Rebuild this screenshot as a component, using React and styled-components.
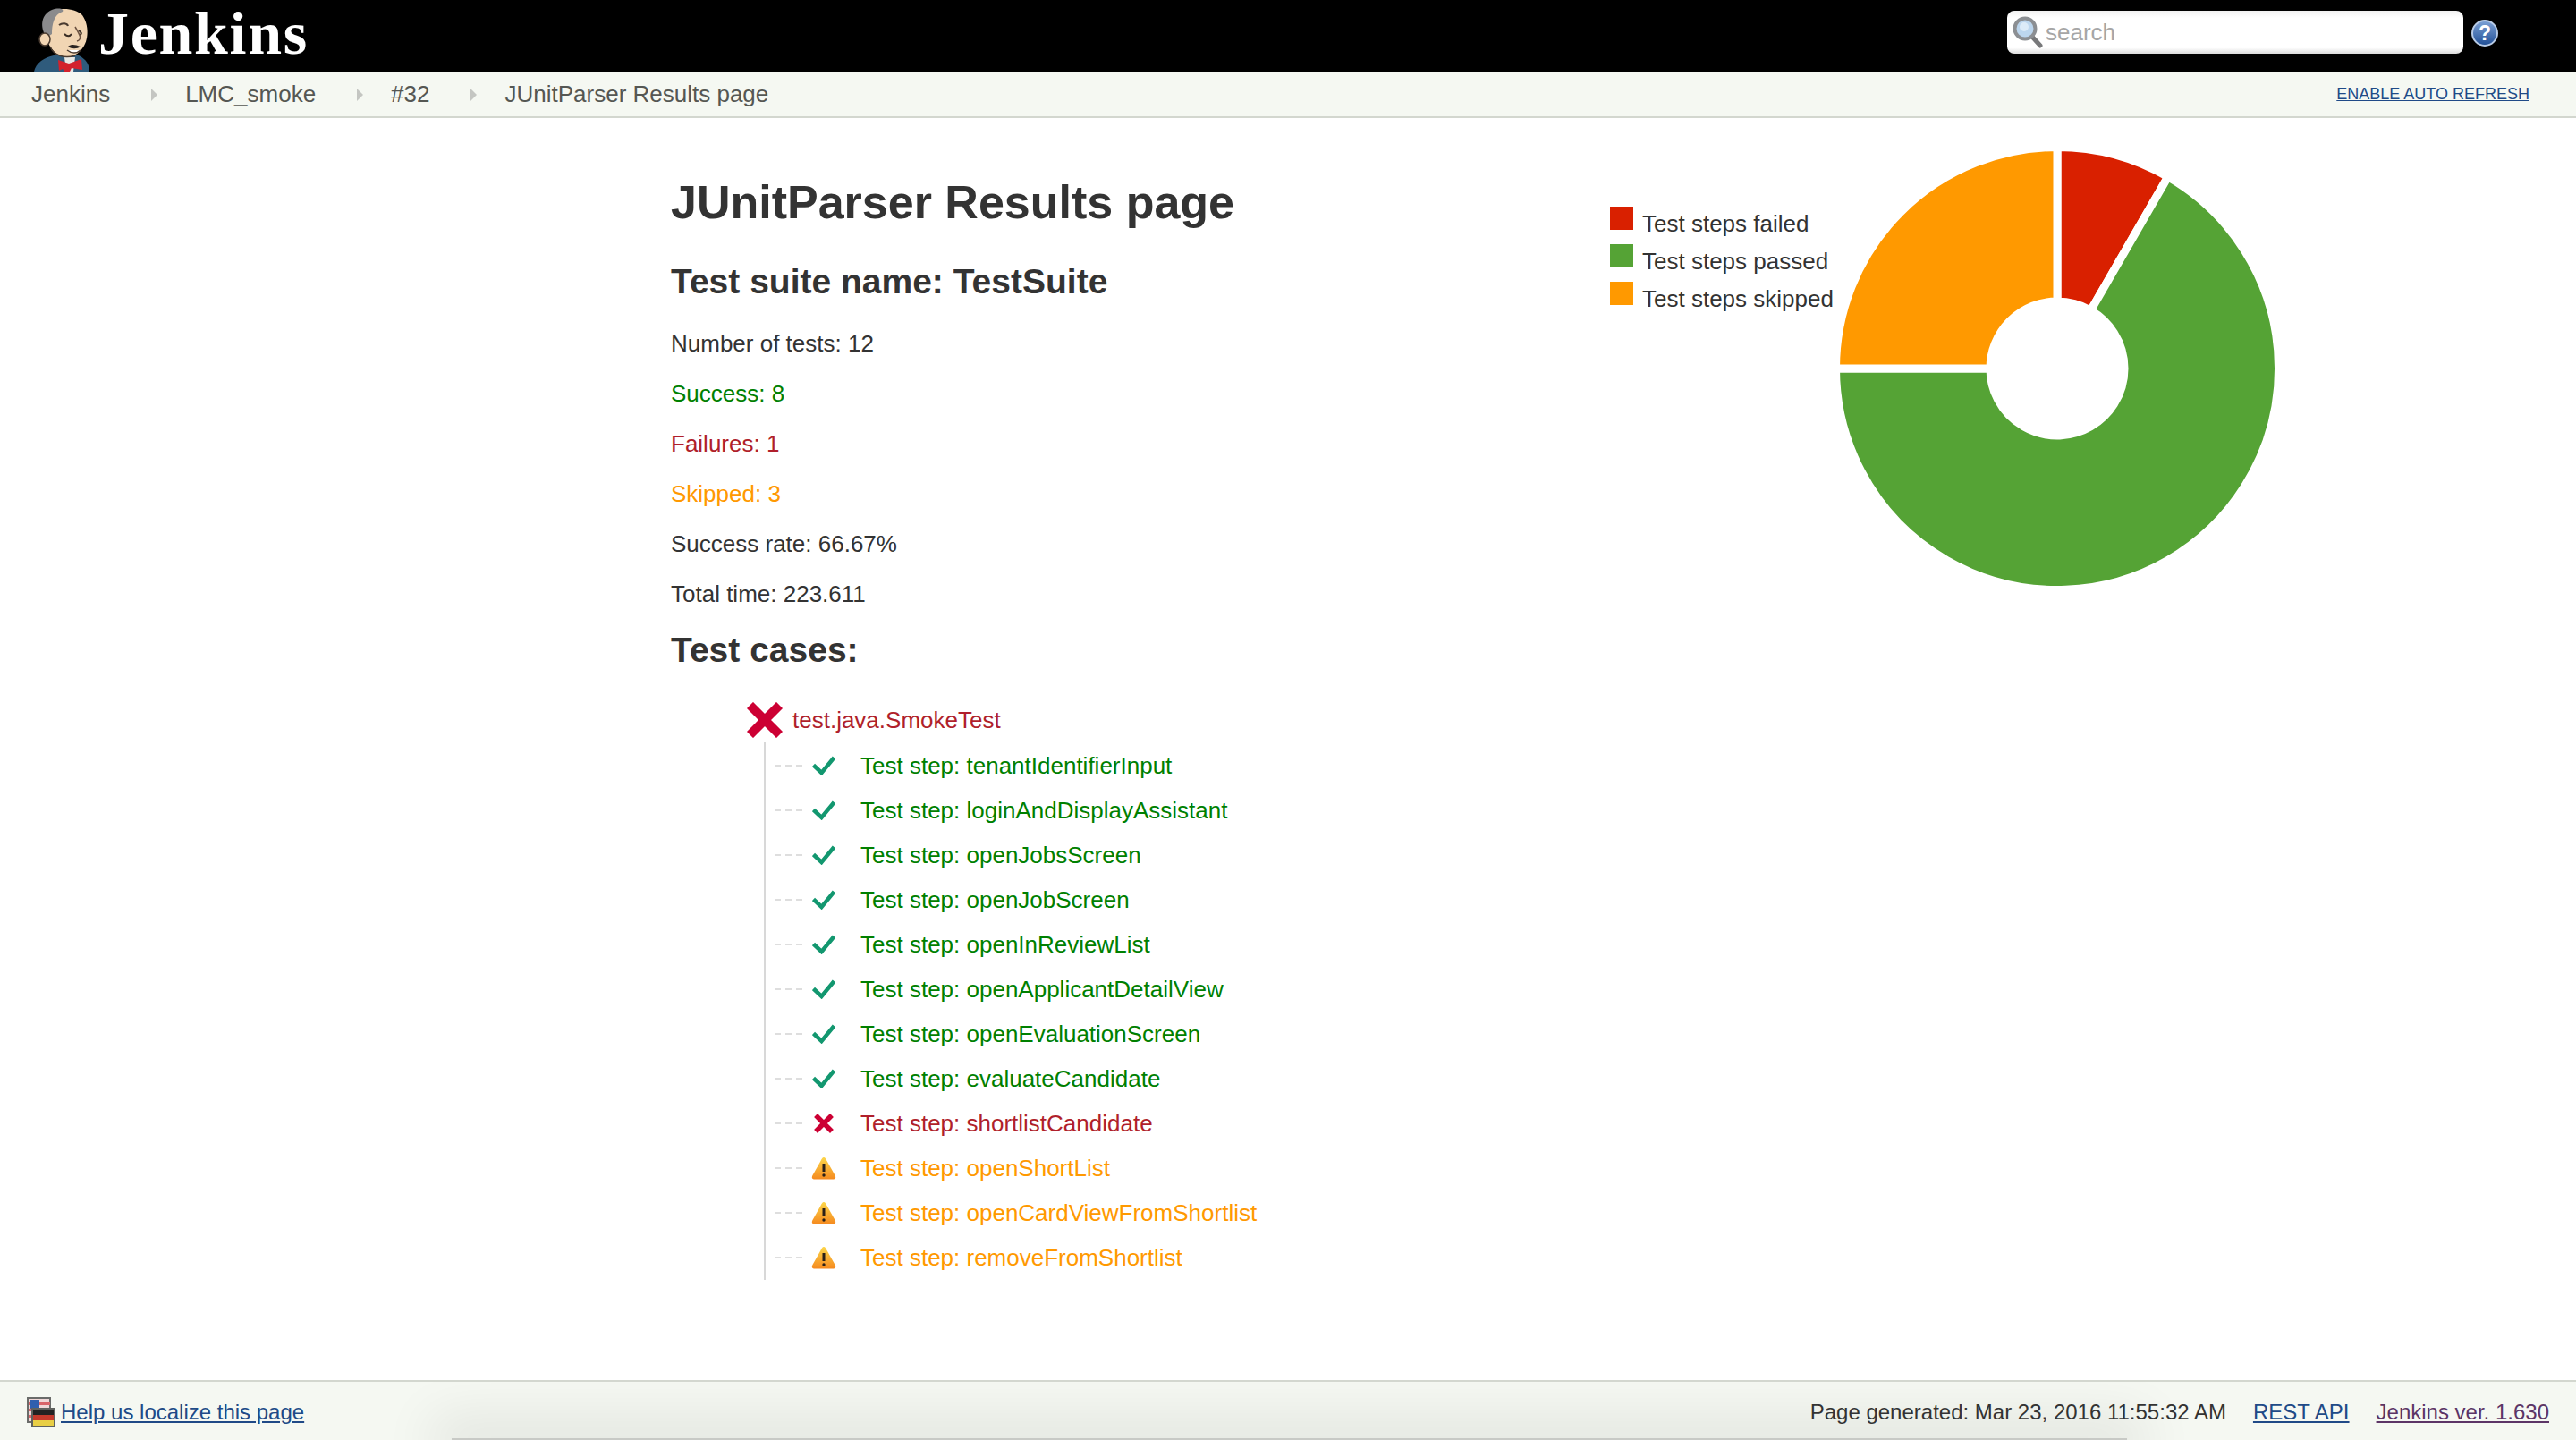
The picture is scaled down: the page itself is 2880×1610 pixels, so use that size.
import React from 'react';
import styled, { createGlobalStyle } from 'styled-components';

const GlobalStyle = createGlobalStyle`
  html, body {
    margin: 0;
    padding: 0;
    background: #fff;
    font-family: "Liberation Sans", Arial, sans-serif;
    font-size: 26px;
    color: #333;
  }
`;

const STATUS_COLORS = {
  passed: '#008000',
  failed: '#b01f2b',
  skipped: '#ff9900',
};

const Page = styled.div`
  display: flex;
  flex-direction: column;
  min-height: 1610px;
`;

const Header = styled.header`
  display: flex;
  align-items: flex-start;
  height: 80px;
  background: #000;
`;

const Logo = styled.a`
  display: flex;
  align-items: flex-start;
  margin-left: 36px;

  svg {
    margin-top: 6px;
  }
`;

const LogoText = styled.span`
  margin: 4px 0 0 6px;
  font-family: "Liberation Serif", "Times New Roman", serif;
  font-size: 68px;
  line-height: 66px;
  font-weight: bold;
  letter-spacing: 1.7px;
  color: #fff;
`;

const SearchArea = styled.div`
  display: flex;
  align-items: center;
  gap: 8px;
  margin: 12px 0 0 auto;
  padding-right: 86px;
`;

const SearchBox = styled.div`
  display: flex;
  align-items: center;
  gap: 3px;
  box-sizing: border-box;
  width: 510px;
  height: 48px;
  padding-left: 6px;
  border-radius: 8px;
  background: linear-gradient(#f1f1f1 0, #fff 8px, #fff 86%, #dcdcdc 100%);
`;

const SearchPlaceholder = styled.span`
  padding-top: 1px;
  font-size: 26px;
  color: #a6a6a6;
`;

const HelpSlot = styled.span`
  display: flex;
  padding-top: 2px;
`;

const Breadcrumbs = styled.nav`
  display: flex;
  align-items: center;
  box-sizing: border-box;
  height: 52px;
  padding: 0 52px 0 35px;
  background: #f5f8f2;
  border-bottom: 2px solid #d3d7cf;
`;

const Crumb = styled.span`
  font-size: 26px;
  color: #555753;
`;

const CrumbArrow = styled.span`
  width: 0;
  height: 0;
  margin: 2px 31px 0 46px;
  border-top: 7px solid transparent;
  border-bottom: 7px solid transparent;
  border-left: 7px solid #c4c6c2;
`;

const AutoRefresh = styled.a`
  margin-left: auto;
  font-size: 18px;
  color: #204a87;
  text-decoration: underline;
`;

const Content = styled.main`
  display: flex;
  padding-left: 750px;
`;

const Results = styled.section`
  width: 1050px;
`;

const Title = styled.h1`
  margin: 64px 0 0;
  font-size: 52px;
  line-height: 60px;
  font-weight: bold;
  color: #333;
`;

const SectionTitle = styled.h2`
  margin: ${(p) => p.$top}px 0 0;
  font-size: 39px;
  line-height: 46px;
  font-weight: bold;
  color: #333;
`;

const Stats = styled.div`
  margin-top: 18px;
`;

const Stat = styled.p`
  margin: 0;
  font-size: 26px;
  line-height: 56px;
  color: ${(p) => STATUS_COLORS[p.$status] || '#333'};
`;

const RootCase = styled.div`
  display: flex;
  align-items: center;
  gap: 11px;
  height: 50px;
  margin: 30px 0 0 85px;
  font-size: 26px;
  color: ${STATUS_COLORS.failed};
`;

const StepList = styled.ul`
  width: 700px;
  margin: 0 0 0 104px;
  padding: 1px 0 0 10px;
  list-style: none;
  border-left: 2px solid #d8d8d8;
`;

const StepRow = styled.li`
  display: flex;
  align-items: center;
  height: 50px;
  font-size: 26px;
  color: ${(p) => STATUS_COLORS[p.$status]};
`;

const Connector = styled.span`
  width: 31px;
  height: 2px;
  background: repeating-linear-gradient(90deg, #dedede 0 7px, transparent 7px 12px);
`;

const StepIcon = styled.span`
  display: flex;
  align-items: center;
  justify-content: center;
  width: 34px;
  margin: 0 24px 0 7px;
`;

const ChartPanel = styled.aside`
  display: flex;
  align-items: flex-start;
  padding-top: 30px;
`;

const Legend = styled.ul`
  width: 250px;
  margin: 67px 0 0;
  padding: 0;
  list-style: none;
`;

const LegendItem = styled.li`
  display: flex;
  align-items: center;
  height: 42px;
  font-size: 26px;
  white-space: nowrap;
  color: #333;
`;

const Swatch = styled.span`
  width: 26px;
  height: 26px;
  margin: -12px 10px 0 0;
  background: ${(p) => p.$color};
`;

const Footer = styled.footer`
  position: relative;
  display: flex;
  align-items: center;
  box-sizing: border-box;
  height: 67px;
  margin-top: auto;
  padding: 2px 30px 0;
  overflow: hidden;
  background: #f5f8f2;
  border-top: 2px solid #d3d7cf;

  &::before {
    content: '';
    position: absolute;
    left: 505px;
    right: 502px;
    bottom: 0;
    height: 2px;
    background: #c8cac6;
    box-shadow: 0 0 60px 22px rgba(0, 0, 0, 0.09);
  }
`;

const FooterLeft = styled.div`
  position: relative;
  display: flex;
  align-items: center;
  gap: 6px;
`;

const FooterRight = styled.div`
  position: relative;
  display: flex;
  gap: 30px;
  margin-left: auto;
`;

const FooterLink = styled.a`
  font-size: 24px;
  color: ${(p) => (p.$visited ? '#5c3566' : '#204a87')};
  text-decoration: underline;
`;

const Generated = styled.span`
  font-size: 24px;
  color: #333;
`;

const ButlerLogo = () => (
  <svg width="68" height="74" viewBox="36 6 68 74">
    <path d="M38 80 C40 70 50 64 60 62 L88 62 C96 66 100 72 100 80 Z" fill="#2f5b7c" />
    <path d="M72 64 L84 64 L82 80 L74 80 Z" fill="#e8e8e4" />
    <path d="M65 67 L77 71 L91 66 L92 78 L80 76 L78 80 L72 80 L70 77 L66 79 Z" fill="#d3222c" />
    <path d="M56 52 C50 40 46 24 54 15 C62 8 84 8 92 17 C100 28 99 46 92 54 C84 66 66 68 56 52 Z" fill="#f1d5b3" />
    <path d="M52 42 C44 30 46 16 58 11 C66 8 72 10 70 13 C60 16 58 28 58 38 Z" fill="#8a8a8c" />
    <ellipse cx="50" cy="44" rx="6" ry="7" fill="#f1d5b3" stroke="#4a3b30" strokeWidth="1.5" />
    <path d="M66 28 C70 25 75 26 76 29" fill="none" stroke="#4a3b30" strokeWidth="2" />
    <path d="M72 38 C75 41 78 41 80 38" fill="none" stroke="#3a2d24" strokeWidth="2" />
    <path d="M88 34 C91 36 92 38 89 39" fill="none" stroke="#3a2d24" strokeWidth="2" />
    <path d="M84 30 C90 40 92 44 86 46" fill="none" stroke="#6b5140" strokeWidth="1.5" />
    <path d="M76 52 C80 49 84 50 90 52 C86 55 80 55 76 52 Z" fill="#2a2320" />
    <path d="M75 56 C80 60 86 60 90 56" fill="#fff" stroke="#4a3b30" strokeWidth="1.5" />
    <path d="M56 52 C60 62 72 66 84 62" fill="none" stroke="#4a3b30" strokeWidth="1.5" />
  </svg>
);

const SearchIcon = () => (
  <svg width="34" height="38" viewBox="0 0 34 38">
    <path d="M22 24 L31 34" stroke="#77787a" strokeWidth="5" strokeLinecap="round" />
    <circle cx="14" cy="15" r="11.5" fill="#bcd6ee" stroke="#8c8f93" strokeWidth="4" />
    <circle cx="13" cy="13" r="5" fill="#dcebf8" />
  </svg>
);

const HelpIcon = () => (
  <svg width="32" height="32" viewBox="0 0 32 32">
    <defs>
      <linearGradient id="helpFill" x1="0" y1="0" x2="0" y2="1">
        <stop offset="0" stopColor="#7fa3d6" />
        <stop offset="1" stopColor="#1f4e96" />
      </linearGradient>
    </defs>
    <circle cx="16" cy="16" r="14" fill="url(#helpFill)" stroke="#b8cbe6" strokeWidth="2" />
    <text x="16" y="24" textAnchor="middle" fontFamily="Liberation Sans" fontWeight="bold" fontSize="23" fill="#fff">?</text>
  </svg>
);

const BigCross = () => (
  <svg width="40" height="40" viewBox="0 0 40 40">
    <path d="M7 7 L33 33 M33 7 L7 33" stroke="#cc0033" strokeWidth="10" strokeLinecap="square" />
  </svg>
);

const SmallCross = () => (
  <svg width="22" height="22" viewBox="0 0 22 22">
    <path d="M4 4 L18 18 M18 4 L4 18" stroke="#cc0033" strokeWidth="5.5" strokeLinecap="square" />
  </svg>
);

const Check = () => (
  <svg width="26" height="22" viewBox="0 0 26 22">
    <path d="M1.5 10.5 L10.5 19 L24.5 2" fill="none" stroke="#12976f" strokeWidth="4.5" />
  </svg>
);

const Warning = ({ id }) => (
  <svg width="28" height="26" viewBox="0 0 28 26">
    <defs>
      <linearGradient id={id} x1="0" y1="0" x2="0" y2="1">
        <stop offset="0" stopColor="#fcd64a" />
        <stop offset="1" stopColor="#f58a1f" />
      </linearGradient>
    </defs>
    <path d="M14 1 C15.5 1 16.5 3 17.5 5 L26.5 21 C28 24 27 25.5 24 25.5 L4 25.5 C1 25.5 0 24 1.5 21 L10.5 5 C11.5 3 12.5 1 14 1 Z" fill={`url(#${id})`} />
    <path d="M14 8 L14 17" stroke="#2b2018" strokeWidth="3" />
    <circle cx="14" cy="21" r="1.7" fill="#2b2018" />
  </svg>
);

const FlagsIcon = () => (
  <svg width="32" height="34" viewBox="0 0 32 34">
    <rect x="1" y="1" width="25" height="27" fill="#f0d8d8" stroke="#6a6c6a" strokeWidth="2" />
    <rect x="2" y="6" width="24" height="3" fill="#d9656a" />
    <rect x="2" y="13" width="24" height="3" fill="#d9656a" />
    <rect x="2" y="20" width="24" height="3" fill="#d9656a" />
    <rect x="3" y="3" width="11" height="10" fill="#2f5fae" />
    <rect x="6" y="13" width="25" height="20" fill="#222" stroke="#5f625e" strokeWidth="2" />
    <rect x="7" y="20" width="23" height="6" fill="#c43a2c" />
    <rect x="7" y="26" width="23" height="6" fill="#e8cf45" />
  </svg>
);

const polar = (r, deg) => {
  const rad = ((deg - 90) * Math.PI) / 180;
  return [250 + r * Math.cos(rad), 250 + r * Math.sin(rad)];
};

const slicePath = (start, end, outer, inner) => {
  const large = end - start > 180 ? 1 : 0;
  const [x1, y1] = polar(outer, start);
  const [x2, y2] = polar(outer, end);
  const [x3, y3] = polar(inner, end);
  const [x4, y4] = polar(inner, start);
  return `M${x1} ${y1} A${outer} ${outer} 0 ${large} 1 ${x2} ${y2} L${x3} ${y3} A${inner} ${inner} 0 ${large} 0 ${x4} ${y4} Z`;
};

const slices = [
  { label: 'Test steps failed', value: 1, color: '#d92000' },
  { label: 'Test steps passed', value: 8, color: '#55a335' },
  { label: 'Test steps skipped', value: 3, color: '#ff9900' },
];

const Donut = () => {
  const total = slices.reduce((sum, s) => sum + s.value, 0);
  let angle = 0;
  return (
    <svg width="500" height="500" viewBox="0 0 500 500">
      {slices.map((s) => {
        const start = angle;
        angle += (s.value / total) * 360;
        return (
          <path
            key={s.label}
            d={slicePath(start, angle, 247.5, 75)}
            fill={s.color}
            stroke="#fff"
            strokeWidth="9"
          />
        );
      })}
    </svg>
  );
};

const stats = [
  { text: 'Number of tests: 12' },
  { text: 'Success: 8', status: 'passed' },
  { text: 'Failures: 1', status: 'failed' },
  { text: 'Skipped: 3', status: 'skipped' },
  { text: 'Success rate: 66.67%' },
  { text: 'Total time: 223.611' },
];

const steps = [
  { name: 'tenantIdentifierInput', status: 'passed' },
  { name: 'loginAndDisplayAssistant', status: 'passed' },
  { name: 'openJobsScreen', status: 'passed' },
  { name: 'openJobScreen', status: 'passed' },
  { name: 'openInReviewList', status: 'passed' },
  { name: 'openApplicantDetailView', status: 'passed' },
  { name: 'openEvaluationScreen', status: 'passed' },
  { name: 'evaluateCandidate', status: 'passed' },
  { name: 'shortlistCandidate', status: 'failed' },
  { name: 'openShortList', status: 'skipped' },
  { name: 'openCardViewFromShortlist', status: 'skipped' },
  { name: 'removeFromShortlist', status: 'skipped' },
];

const crumbs = ['Jenkins', 'LMC_smoke', '#32', 'JUnitParser Results page'];

const stepIcon = (step) => {
  if (step.status === 'passed') return <Check />;
  if (step.status === 'failed') return <SmallCross />;
  return <Warning id={`warn-${step.name}`} />;
};

const App = () => (
  <Page>
    <GlobalStyle />
    <Header>
      <Logo>
        <ButlerLogo />
        <LogoText>Jenkins</LogoText>
      </Logo>
      <SearchArea>
        <SearchBox>
          <SearchIcon />
          <SearchPlaceholder>search</SearchPlaceholder>
        </SearchBox>
        <HelpSlot>
          <HelpIcon />
        </HelpSlot>
      </SearchArea>
    </Header>
    <Breadcrumbs>
      {crumbs.map((crumb, i) => (
        <React.Fragment key={crumb}>
          <Crumb>{crumb}</Crumb>
          {i < crumbs.length - 1 && <CrumbArrow />}
        </React.Fragment>
      ))}
      <AutoRefresh href="#">ENABLE AUTO REFRESH</AutoRefresh>
    </Breadcrumbs>
    <Content>
      <Results>
        <Title>JUnitParser Results page</Title>
        <SectionTitle $top={36}>Test suite name: TestSuite</SectionTitle>
        <Stats>
          {stats.map((stat) => (
            <Stat key={stat.text} $status={stat.status}>{stat.text}</Stat>
          ))}
        </Stats>
        <SectionTitle $top={12}>Test cases:</SectionTitle>
        <RootCase>
          <BigCross />
          test.java.SmokeTest
        </RootCase>
        <StepList>
          {steps.map((step) => (
            <StepRow key={step.name} $status={step.status}>
              <Connector />
              <StepIcon>{stepIcon(step)}</StepIcon>
              Test step: {step.name}
            </StepRow>
          ))}
        </StepList>
      </Results>
      <ChartPanel>
        <Legend>
          {slices.map((s) => (
            <LegendItem key={s.label}>
              <Swatch $color={s.color} />
              {s.label}
            </LegendItem>
          ))}
        </Legend>
        <Donut />
      </ChartPanel>
    </Content>
    <Footer>
      <FooterLeft>
        <FlagsIcon />
        <FooterLink href="#">Help us localize this page</FooterLink>
      </FooterLeft>
      <FooterRight>
        <Generated>Page generated: Mar 23, 2016 11:55:32 AM</Generated>
        <FooterLink href="#">REST API</FooterLink>
        <FooterLink href="#" $visited>Jenkins ver. 1.630</FooterLink>
      </FooterRight>
    </Footer>
  </Page>
);

export default App;
